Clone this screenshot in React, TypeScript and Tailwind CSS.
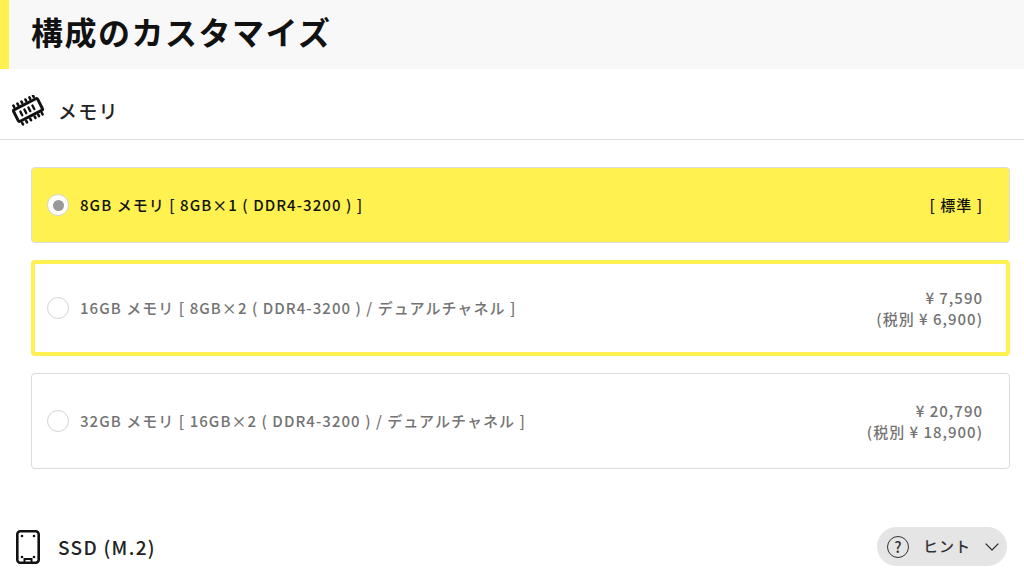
import { ChevronDown } from "lucide-react";
import type { ReactNode } from "react";

type MemoryOption = {
  label: string;
  selected?: boolean;
  focused?: boolean;
  price?: string;
  taxFree?: string;
};

const options: MemoryOption[] = [
  { label: "8GB メモリ [ 8GB×1 ( DDR4-3200 ) ]", selected: true },
  {
    label: "16GB メモリ [ 8GB×2 ( DDR4-3200 ) / デュアルチャネル ]",
    focused: true,
    price: "¥ 7,590",
    taxFree: "(税別 ¥ 6,900)",
  },
  {
    label: "32GB メモリ [ 16GB×2 ( DDR4-3200 ) / デュアルチャネル ]",
    price: "¥ 20,790",
    taxFree: "(税別 ¥ 18,900)",
  },
];

function MemoryIcon() {
  return (
    <svg width="34" height="32" viewBox="0 0 34 32" fill="none" stroke="#111" strokeLinecap="round">
      <g transform="translate(0 -1) rotate(-27 17 16)">
        <rect x="3.5" y="9.5" width="27" height="13" rx="1.5" strokeWidth="3" />
        <path d="M9.5 14v4M14 14v4M18.5 14v4M23 14v4" strokeWidth="2.4" />
        <path d="M6 5.5v1.5M10.5 5.5v1.5M15 5.5v1.5M19.5 5.5v1.5M24 5.5v1.5M28 5.5v1.5M6 25v1.5M10.5 25v1.5M15 25v1.5M20 25v1.5M24 25v1.5M28 25v1.5" strokeWidth="2.6" />
      </g>
    </svg>
  );
}

function SsdIcon() {
  return (
    <svg width="26" height="36" viewBox="0 0 26 36" fill="none">
      <rect x="2.3" y="2.3" width="21.4" height="31.4" rx="3" stroke="#111" strokeWidth="2.6" />
      <circle cx="7" cy="7" r="1.3" fill="#111" />
      <circle cx="19" cy="7" r="1.3" fill="#111" />
      <circle cx="7" cy="28" r="1.3" fill="#111" />
      <circle cx="19" cy="28" r="1.3" fill="#111" />
      <path d="M9.5 33v-3h7v3" stroke="#111" strokeWidth="2" />
    </svg>
  );
}

function SectionHeading({ icon, children }: { icon: ReactNode; children: ReactNode }) {
  return (
    <div className="flex items-center gap-[13px] pl-[11px]">
      <div className="flex w-[34px] justify-center">{icon}</div>
      <h2 className="pt-0.5 text-[19px] font-medium tracking-[1.3px] text-[#222]">{children}</h2>
    </div>
  );
}

function OptionCard({ option }: { option: MemoryOption }) {
  const border = option.focused
    ? "border-4 border-[#fff150] pl-3 pr-[23px]"
    : "border border-[#dcdcdc] pl-[15px] pr-[26px]";
  const surface = option.selected ? "h-[76px] bg-[#fff150] text-[#111]" : "h-[96px] bg-white text-[#737373]";

  return (
    <div className={`flex items-center justify-between rounded ${border} ${surface}`}>
      <div className="flex items-center gap-[11px]">
        <span className="flex h-[22px] w-[22px] items-center justify-center rounded-full border border-[#d4d4d4] bg-white">
          {option.selected && <span className="h-[11px] w-[11px] rounded-full bg-[#999]" />}
        </span>
        <span className="text-[15px] font-medium tracking-[1.05px]">{option.label}</span>
      </div>
      {option.selected ? (
        <span className="text-[15px] font-medium tracking-[1px]">[ 標準 ]</span>
      ) : (
        <div className="text-right text-[15px] font-medium leading-[21px] tracking-[1px]">
          <p>{option.price}</p>
          <p>{option.taxFree}</p>
        </div>
      )}
    </div>
  );
}

export default function App() {
  return (
    <div className="h-[571px] w-[1024px] overflow-hidden bg-white font-['Noto_Sans_CJK_JP',sans-serif]">
      <header className="flex h-[69px] items-center border-l-[9px] border-[#fff150] bg-[#f8f8f8] pb-[7px] pl-[22px]">
        <h1 className="text-[32px] font-bold tracking-[1.5px] text-[#111]">構成のカスタマイズ</h1>
      </header>

      <div className="flex h-[71px] items-center border-b border-[#dddddd] pt-[13px]">
        <SectionHeading icon={<MemoryIcon />}>メモリ</SectionHeading>
      </div>

      <div className="mt-[27px] ml-[31px] flex w-[979px] flex-col gap-[17px]">
        {options.map((option) => (
          <OptionCard key={option.label} option={option} />
        ))}
      </div>

      <div className="mt-[58px] flex items-center justify-between pr-[17px]">
        <SectionHeading icon={<SsdIcon />}>SSD (M.2)</SectionHeading>
        <button className="flex h-[39px] w-[130px] items-center rounded-full bg-[#e5e5e5] pl-[10px] text-[#333]">
          <span className="flex h-[22px] w-[22px] items-center justify-center rounded-full border-[1.5px] border-[#333] text-[15px] font-medium leading-none">
            ?
          </span>
          <span className="ml-[14px] text-[15px] font-medium tracking-[1px]">ヒント</span>
          <ChevronDown className="ml-[9px] h-6 w-6" strokeWidth={1.2} />
        </button>
      </div>
    </div>
  );
}
